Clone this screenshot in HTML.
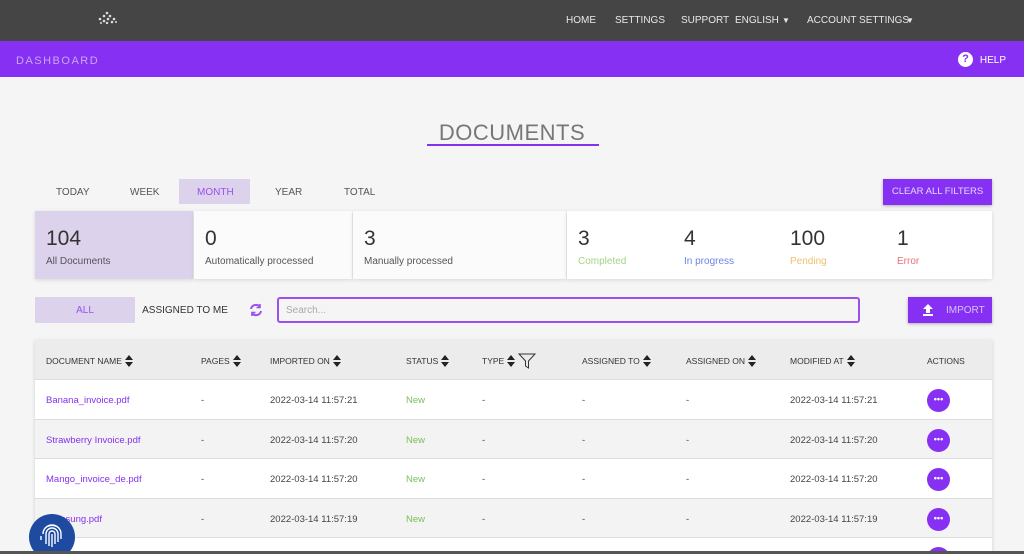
<!DOCTYPE html>
<html><head><meta charset="utf-8">
<style>
*{box-sizing:border-box;margin:0;padding:0}
html,body{width:1024px;height:554px;overflow:hidden}
body{background:#f5f5f5;font-family:"Liberation Sans",sans-serif;color:#444;position:relative}
.top{height:41px;background:#454545;position:relative}
.top span{position:absolute;top:15px;font-size:10px;color:#e8e8e8}
.bar{height:36px;background:#8530f2;position:relative}
.bar .d{position:absolute;left:16px;top:14px;font-size:11px;letter-spacing:1.5px;color:#c9a6f7}
.bar .h{position:absolute;right:18px;top:14px;font-size:10px;color:#fff}
.title{position:absolute;left:0;width:1024px;top:120px;text-align:center;font-size:22px;color:#777;letter-spacing:.5px}
.uline{position:absolute;left:427px;top:144px;width:172px;height:2px;background:#8530f2}
.tabs span{position:absolute;top:187px;font-size:10px;color:#555}
.month{position:absolute;left:179px;top:179px;width:71px;height:25px;background:#dcd2ec}
.clear{position:absolute;left:883px;top:179px;width:109px;height:26px;background:#8530f2;color:#e6d8fb;font-size:9.5px;text-align:center;line-height:26px;box-shadow:0 1px 3px rgba(0,0,0,.3)}
.card{position:absolute;top:211px;height:68px;background:#fbfbfb;box-shadow:0 1px 4px rgba(0,0,0,.12)}
.n{position:absolute;top:227px;font-size:21px;color:#333}
.l{position:absolute;top:256px;font-size:10px;color:#555}
.tg{position:absolute;top:297px;height:26px;font-size:10px;line-height:27px;text-align:center}
.search{position:absolute;left:277px;top:297px;width:583px;height:26px;border:2px solid #9b50f0;border-radius:3px;background:#f5f5f5;font-size:10px;color:#aaa;padding-left:7px;line-height:23px}
.imp{position:absolute;left:908px;top:297px;width:84px;height:26px;background:#8530f2;box-shadow:0 1px 3px rgba(0,0,0,.3);color:#d8c2fa;font-size:10px;line-height:27px}
.tbl{position:absolute;left:35px;top:340px;width:957px;height:220px;box-shadow:0 1px 4px rgba(0,0,0,.15)}
.hd{height:40px;background:#ececec;position:relative;border-bottom:1px solid #ddd}
.row{height:39.6px;position:relative;border-bottom:1px solid #ddd}
.c{position:absolute;font-size:9.5px;top:1px;line-height:40px;white-space:nowrap}
.hd .c{font-size:8.5px;color:#333}
.s{display:inline-block;vertical-align:middle;margin-left:3px;margin-top:-2px}
.a{color:#8530f2}
.g{color:#7bbf55}
.dot{position:absolute;left:892px;top:9px;width:23px;height:23px;border-radius:50%;background:#8530f2;color:#fff;font-size:9px;text-align:center;line-height:21px;font-weight:bold}
.fp{position:absolute;left:29px;top:514px;width:46px;height:46px;border-radius:50%;background:#1e4aa0}
.bot{position:absolute;left:0;top:551px;width:1024px;height:3px;background:#555}
</style></head><body>
<div class="top">
<svg style="position:absolute;left:96px;top:10px" width="22" height="14"><g fill="#ddd"><circle cx="4" cy="9" r="1.3"/><circle cx="8" cy="6" r="1.3"/><circle cx="11" cy="3" r="1.3"/><circle cx="14" cy="6" r="1.3"/><circle cx="18" cy="9" r="1.3"/><circle cx="8" cy="11" r="1.3"/><circle cx="12" cy="9" r="1.3"/><circle cx="16" cy="12" r="1.3"/><circle cx="5" cy="13" r="1"/><circle cx="11" cy="13" r="1.2"/><circle cx="20" cy="12" r="1"/></g></svg>
<span style="left:566px">HOME</span><span style="left:615px">SETTINGS</span><span style="left:681px">SUPPORT</span><span style="left:735px">ENGLISH</span><span style="left:782px;font-size:8px;top:16px">▼</span><span style="left:807px">ACCOUNT SETTINGS</span><span style="left:906px;font-size:8px;top:16px">▼</span>
</div>
<div class="bar"><div class="d">DASHBOARD</div>
<div style="position:absolute;left:958px;top:11px;width:15px;height:15px;border-radius:50%;background:#fff;color:#8530f2;font-size:11px;font-weight:bold;text-align:center;line-height:15px">?</div>
<div class="h">HELP</div></div>
<div class="title">DOCUMENTS</div><div class="uline"></div>
<div class="month"></div>
<div class="tabs"><span style="left:56px">TODAY</span><span style="left:130px">WEEK</span><span style="left:197px;color:#9b50f0">MONTH</span><span style="left:275px">YEAR</span><span style="left:344px">TOTAL</span></div>
<div class="clear">CLEAR ALL FILTERS</div>
<div class="card" style="left:35px;width:158px;background:#dcd2ec"></div>
<div class="card" style="left:194px;width:158px"></div>
<div class="card" style="left:353px;width:213px"></div>
<div class="card" style="left:567px;width:425px;background:#fff"></div>
<div class="n" style="left:46px">104</div><div class="l" style="left:46px">All Documents</div>
<div class="n" style="left:205px">0</div><div class="l" style="left:205px">Automatically processed</div>
<div class="n" style="left:364px">3</div><div class="l" style="left:364px">Manually processed</div>
<div class="n" style="left:578px">3</div><div class="l" style="left:578px;color:#a4d384">Completed</div>
<div class="n" style="left:684px">4</div><div class="l" style="left:684px;color:#6b84e8">In progress</div>
<div class="n" style="left:790px">100</div><div class="l" style="left:790px;color:#f0c070">Pending</div>
<div class="n" style="left:897px">1</div><div class="l" style="left:897px;color:#e8707a">Error</div>
<div class="tg" style="left:35px;width:100px;background:#dcd2ec;color:#9b50f0">ALL</div>
<div class="tg" style="left:135px;width:100px;color:#333">ASSIGNED TO ME</div>
<svg style="position:absolute;left:249px;top:303px" width="14" height="14" viewBox="0 0 14 14" fill="none" stroke="#9b50f0" stroke-width="2"><path d="M2 6A5 5 0 0 1 11 4M12 8A5 5 0 0 1 3 10"/><path d="M11 1v3.5H7.5M3 13V9.5h3.5" stroke-width="1.6"/></svg>
<div class="search">Search...</div>
<div class="imp"><svg style="position:absolute;left:14px;top:7px" width="12" height="12" viewBox="0 0 12 12" fill="#fff"><path d="M6 0L11 5H8v4H4V5H1z"/><rect x="1" y="10" width="10" height="2"/></svg><span style="position:absolute;left:38px;top:0">IMPORT</span></div>
<div class="tbl">
<div class="hd">
<div class="c" style="left:11px">DOCUMENT NAME<svg class="s" width="8" height="12" viewBox="0 0 8 12" fill="#222"><path d="M4 0L8 5H0zM4 12L0 7h8z"/></svg></div>
<div class="c" style="left:166px">PAGES<svg class="s" width="8" height="12" viewBox="0 0 8 12" fill="#222"><path d="M4 0L8 5H0zM4 12L0 7h8z"/></svg></div>
<div class="c" style="left:235px">IMPORTED ON<svg class="s" width="8" height="12" viewBox="0 0 8 12" fill="#222"><path d="M4 0L8 5H0zM4 12L0 7h8z"/></svg></div>
<div class="c" style="left:371px">STATUS<svg class="s" width="8" height="12" viewBox="0 0 8 12" fill="#222"><path d="M4 0L8 5H0zM4 12L0 7h8z"/></svg></div>
<div class="c" style="left:447px">TYPE<svg class="s" width="8" height="12" viewBox="0 0 8 12" fill="#222"><path d="M4 0L8 5H0zM4 12L0 7h8z"/></svg><svg width="18" height="16" viewBox="0 0 18 16" class="s" fill="none" stroke="#333"><path d="M1 1h16L10.5 8v7l-3-2V8z"/></svg></div>
<div class="c" style="left:547px">ASSIGNED TO<svg class="s" width="8" height="12" viewBox="0 0 8 12" fill="#222"><path d="M4 0L8 5H0zM4 12L0 7h8z"/></svg></div>
<div class="c" style="left:651px">ASSIGNED ON<svg class="s" width="8" height="12" viewBox="0 0 8 12" fill="#222"><path d="M4 0L8 5H0zM4 12L0 7h8z"/></svg></div>
<div class="c" style="left:755px">MODIFIED AT<svg class="s" width="8" height="12" viewBox="0 0 8 12" fill="#222"><path d="M4 0L8 5H0zM4 12L0 7h8z"/></svg></div>
<div class="c" style="left:892px">ACTIONS</div>
</div>
<div class="row" style="background:#fff"><div class="c a" style="left:11px">Banana_invoice.pdf</div><div class="c" style="left:166px">-</div><div class="c" style="left:235px">2022-03-14 11:57:21</div><div class="c g" style="left:371px">New</div><div class="c" style="left:447px">-</div><div class="c" style="left:547px">-</div><div class="c" style="left:651px">-</div><div class="c" style="left:755px">2022-03-14 11:57:21</div><div class="dot">•••</div></div>
<div class="row" style="background:#f3f3f3"><div class="c a" style="left:11px">Strawberry Invoice.pdf</div><div class="c" style="left:166px">-</div><div class="c" style="left:235px">2022-03-14 11:57:20</div><div class="c g" style="left:371px">New</div><div class="c" style="left:447px">-</div><div class="c" style="left:547px">-</div><div class="c" style="left:651px">-</div><div class="c" style="left:755px">2022-03-14 11:57:20</div><div class="dot">•••</div></div>
<div class="row" style="background:#fff"><div class="c a" style="left:11px">Mango_invoice_de.pdf</div><div class="c" style="left:166px">-</div><div class="c" style="left:235px">2022-03-14 11:57:20</div><div class="c g" style="left:371px">New</div><div class="c" style="left:447px">-</div><div class="c" style="left:547px">-</div><div class="c" style="left:651px">-</div><div class="c" style="left:755px">2022-03-14 11:57:20</div><div class="dot">•••</div></div>
<div class="row" style="background:#f3f3f3"><div class="c a" style="left:11px">Samsung.pdf</div><div class="c" style="left:166px">-</div><div class="c" style="left:235px">2022-03-14 11:57:19</div><div class="c g" style="left:371px">New</div><div class="c" style="left:447px">-</div><div class="c" style="left:547px">-</div><div class="c" style="left:651px">-</div><div class="c" style="left:755px">2022-03-14 11:57:19</div><div class="dot">•••</div></div>
<div class="row" style="background:#fff"><div class="dot"></div></div>
</div>
<div class="fp"><svg width="46" height="46" viewBox="0 0 46 46" fill="none" stroke="#fff" stroke-width="1.4"><path d="M14 20a9 9 0 0 1 18 0v5M17 30v-10a6 6 0 0 1 12 0v8M20 32v-12a3 3 0 0 1 6 0v10M23 20v13M12 26v-4M16 14a11 11 0 0 1 14 0"/></svg></div>
<div class="bot"></div>
</body></html>
